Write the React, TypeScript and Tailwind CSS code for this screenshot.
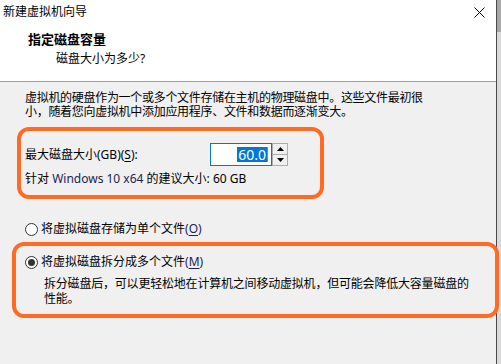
import React from "react";

const font = { fontFamily: '"Noto Sans", "Noto Sans CJK SC", sans-serif' };

function Radio({ checked }: { checked?: boolean }) {
  return (
    <span className="flex h-[13px] w-[13px] shrink-0 items-center justify-center rounded-full border border-[#333333] bg-white">
      {checked && <span className="h-[7px] w-[7px] rounded-full bg-[#333333]" />}
    </span>
  );
}

export default function App() {
  return (
    <div
      className="flex h-[364px] w-[501px] overflow-hidden bg-[#f0f0f0] text-[12px] leading-[14px] text-black"
      style={font}
    >
      <div className="flex w-[496px] shrink-0 flex-col">
        {/* Header */}
        <div className="flex h-[82px] shrink-0 flex-col border-b border-[#a0a0a0] bg-white">
          <div className="flex h-[24px] items-center justify-between pl-[3px] pr-[11px]">
            <span className="text-[12px] leading-[14px]">新建虚拟机向导</span>
            <svg width="11" height="11" viewBox="0 0 11 11">
              <path d="M0.5 0.5 L10.5 10.5 M10.5 0.5 L0.5 10.5" stroke="#000" strokeWidth="1" />
            </svg>
          </div>
          <div className="pl-[28px] pt-[8px] text-[13px] font-bold leading-[15px]">指定磁盘容量</div>
          <div className="pl-[56px] pt-[5px] leading-[14px]">磁盘大小为多少?</div>
        </div>

        {/* Body */}
        <div className="flex flex-col pl-[12px] pt-[9px]">
          <p className="pl-[13px] leading-[14px] tracking-[-0.3px]">
            虚拟机的硬盘作为一个或多个文件存储在主机的物理磁盘中。这些文件最初很
            <br />
            小，随着您向虚拟机中添加应用程序、文件和数据而逐渐变大。
          </p>

          {/* Box 1 */}
          <div className="ml-[5px] mt-[8px] flex w-[307px] flex-col rounded-[12px] border-[4px] border-[#ff6a24] pb-[9px] pl-[4px] pt-[12px]">
            <div className="flex items-center">
              <span className="w-[185px]">
                最大磁盘大小(GB)(<span className="underline underline-offset-2">S</span>):
              </span>
              <div className="flex h-[23px] w-[62px] items-center justify-end border border-[#0078d7] bg-white pr-[3px]">
                <span className="bg-[#0078d7] px-[1px] text-[14px] leading-[15px] text-white">60.0</span>
                <span className="h-[15px] w-[1px] bg-[#e07020]" />
              </div>
              <div className="flex h-[23px] w-[16px] flex-col border border-[#adadad] bg-[#f0f0f0]">
                <div className="flex flex-1 items-center justify-center border-b border-[#adadad]">
                  <svg width="7" height="4" viewBox="0 0 7 4">
                    <path d="M3.5 0 L7 4 L0 4 Z" fill="#000" />
                  </svg>
                </div>
                <div className="flex flex-1 items-center justify-center">
                  <svg width="7" height="4" viewBox="0 0 7 4">
                    <path d="M0 0 L7 0 L3.5 4 Z" fill="#000" />
                  </svg>
                </div>
              </div>
            </div>
            <div className="mt-[6px]">
              针对 <span className="text-[#1a2456]">Windows 10 x64</span> 的建议大小: 60 GB
            </div>
          </div>

          {/* Radio 1 */}
          <label className="ml-[13px] mt-[23px] flex items-center gap-[3px]">
            <Radio />
            <span>
              将虚拟磁盘存储为单个文件<span className="text-[#1a2456]">(<span className="underline underline-offset-2">O</span>)</span>
            </span>
          </label>

          {/* Box 2 */}
          <div className="relative z-10 mr-[-3px] mt-[6px] flex flex-col rounded-[12px] border-[4px] border-[#ff6a24] pb-[8px] pl-[9px] pt-[9px]">
            <label className="flex items-center gap-[3px]">
              <Radio checked />
              <span>
                将虚拟磁盘拆分成多个文件<span className="text-[#1a2456]">(<span className="underline underline-offset-2">M</span>)</span>
              </span>
            </label>
            <p className="mt-[7px] pl-[19px] leading-[15px] tracking-[-0.2px]">
              拆分磁盘后，可以更轻松地在计算机之间移动虚拟机，但可能会降低大容量磁盘的
              <br />
              性能。
            </p>
          </div>
        </div>
      </div>

      {/* Right window edge */}
      <div className="w-[1px] shrink-0 bg-[#4a4a4a]" />
      <div className="flex w-[4px] shrink-0 flex-col bg-[#dadada]">
        <div className="h-[32px] bg-[#a8a8a8]" />
      </div>
    </div>
  );
}
